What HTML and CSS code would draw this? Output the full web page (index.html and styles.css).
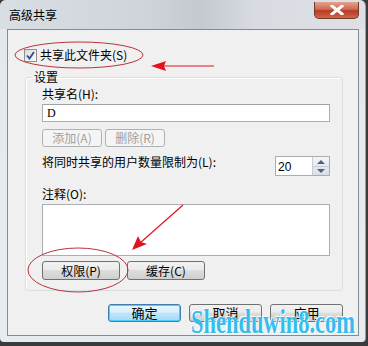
FILE: index.html
```html
<!DOCTYPE html>
<html>
<head>
  <title>高级共享</title>
  <link rel="stylesheet" href="styles.css">
</head>
<body>

  <div class="window">
    <div class="titlebar">
      <span class="title">高级共享</span>
      <span class="close-btn">
        <svg width="14" height="10" viewBox="0 0 14 10">
          <path d="M2 1 L12 9 M12 1 L2 9" stroke="#fff" stroke-width="3" stroke-linecap="square"/>
        </svg>
      </span>
    </div>

    <div class="client">
      <label class="share-check">
        <span class="checkbox">
          <svg width="9" height="9" viewBox="0 0 9 9">
            <path d="M1 4.5 L3.5 7.5 L8 1" fill="none" stroke="#2a4a8a" stroke-width="1.8"/>
          </svg>
        </span>
        共享此文件夹(S)
      </label>

      <fieldset class="settings">
        <legend>设置</legend>

        <div class="field-label">共享名(H):</div>
        <div class="textbox">D</div>

        <div class="btn-row">
          <span class="btn disabled">添加(A)</span>
          <span class="btn disabled">删除(R)</span>
        </div>

        <div class="limit-row">
          <span class="field-label">将同时共享的用户数量限制为(L):</span>
          <span class="spinner">
            <span class="spin-value">20</span>
            <span class="spin-arrows">
              <span class="arrow-up"></span>
              <span class="arrow-down"></span>
            </span>
          </span>
        </div>

        <div class="field-label note-label">注释(O):</div>
        <div class="textarea"></div>

        <div class="btn-row perm-row">
          <span class="btn wide">权限(P)</span>
          <span class="btn wide">缓存(C)</span>
        </div>
      </fieldset>

      <div class="dialog-buttons">
        <span class="btn big default">确定</span>
        <span class="btn big">取消</span>
        <span class="btn big">应用</span>
      </div>
    </div>
  </div>

  <!-- red hand-drawn marks -->
  <svg class="marks" width="368" height="346" viewBox="0 0 368 346">
    <ellipse cx="79" cy="55" rx="64" ry="13" fill="none" stroke="#b8323c" stroke-width="1"/>
    <line x1="214" y1="66" x2="162" y2="66" stroke="#e0141e" stroke-width="1.2"/>
    <path d="M151 66 L166 61 L164 66 L166 71 Z" fill="#e0141e"/>
    <ellipse cx="78" cy="270" rx="50" ry="22" fill="none" stroke="#b8323c" stroke-width="1"/>
    <line x1="183" y1="205" x2="140" y2="243" stroke="#e0141e" stroke-width="1.2"/>
    <path d="M132 250 L138 236 L141 242 L147 244 Z" fill="#e0141e"/>
  </svg>

  <div class="watermark">Shenduwin8.com</div>

</body>
</html>
```

FILE: styles.css
```css
/* Win7 style dialog */
body {
  margin: 0;
  width: 368px;
  height: 346px;
  background: #3b3b3b;
  font-family: "Noto Sans CJK SC", "Liberation Sans", sans-serif;
  font-size: 12px;
  color: #000;
  position: relative;
  overflow: hidden;
}

.window {
  width: 366px;
  height: 342px;
  box-sizing: border-box;
  padding: 0 6px 6px 7px;
  background: linear-gradient(#d6dce3, #e4e8ed 30px, #e9ecef);
  border-radius: 6px 6px 4px 4px;
  border-right: 1px solid #9aa1a8;
  display: flex;
  flex-direction: column;
}

.titlebar {
  height: 29px;
  display: flex;
  align-items: flex-start;
  justify-content: space-between;
  background: linear-gradient(90deg, #d9dee4, #cfd4da 40%, #c4c9cf 55%, #d8dce2 70%, #dde1e6);
  margin: 0 -6px 0 -7px;
  padding: 0 6px 0 9px;
  border-radius: 6px 6px 0 0;
}

.title {
  line-height: 16px;
  margin-top: 7px;
  font-size: 12px;
}

.close-btn {
  width: 45px;
  height: 17px;
  margin-top: 2px;
  box-sizing: border-box;
  border: 1px solid #6e3a2e;
  border-top: none;
  border-radius: 0 0 5px 5px;
  background: linear-gradient(#e3a28f, #cf6a52 45%, #b83a22 55%, #d06848);
  display: flex;
  align-items: center;
  justify-content: center;
}

.client {
  flex: 1;
  background: #f0f0f0;
  border: 1px solid #858b92;
  display: flex;
  flex-direction: column;
}

.share-check {
  display: flex;
  align-items: center;
  gap: 3px;
  height: 16px;
  margin: 17px 0 0 16px;
  line-height: 16px;
}

.checkbox {
  width: 11px;
  height: 11px;
  border: 1px solid #8e8f8f;
  background: linear-gradient(135deg, #dcdcdc, #fbfbfb);
  display: flex;
  align-items: center;
  justify-content: center;
}

.settings {
  margin: 6px 15px 0 17px;
  padding: 1px 12px 10px 16px;
  border: 1px solid #d5dfe5;
  border-radius: 3px;
  box-shadow: inset 1px 1px 0 #fff;
}

.settings legend {
  margin-left: -10px;
  padding: 0 2px;
  line-height: 16px;
}

.field-label {
  line-height: 16px;
}

.textbox {
  height: 18px;
  box-sizing: border-box;
  margin-top: 2px;
  border: 1px solid #abadb3;
  border-top-color: #a0a2a8;
  background: #fff;
  padding-left: 4px;
  line-height: 16px;
  font-family: "Liberation Serif", serif;
}

.btn-row {
  display: flex;
  gap: 3px;
  margin-top: 7px;
}

.btn {
  width: 60px;
  height: 18px;
  box-sizing: border-box;
  border: 1px solid #707070;
  border-radius: 3px;
  background: linear-gradient(#f2f2f2, #ebebeb 45%, #dddddd 50%, #cfcfcf);
  display: flex;
  align-items: center;
  justify-content: center;
  line-height: 16px;
}

.btn.disabled {
  border-color: #adb2b5;
  background: #f4f4f4;
  color: #a0a0a0;
}

.limit-row {
  display: flex;
  justify-content: space-between;
  align-items: flex-start;
  margin-top: 9px;
}

.limit-row .field-label {
  margin-top: -2px;
}

.spinner {
  width: 55px;
  height: 20px;
  box-sizing: border-box;
  border: 1px solid #abadb3;
  background: #fff;
  display: flex;
  justify-content: space-between;
}

.spin-value {
  padding: 2px 0 0 2px;
  line-height: 16px;
  font-family: "Liberation Sans", sans-serif;
  font-size: 12px;
}

.spin-arrows {
  width: 16px;
  display: flex;
  flex-direction: column;
  border-left: 1px solid #c9ccd2;
  background: linear-gradient(#f3f5f8, #d9dee6);
}

.arrow-up,
.arrow-down {
  flex: 1;
  position: relative;
}

.arrow-up::after,
.arrow-down::after {
  content: "";
  position: absolute;
  left: 4px;
  border-left: 4px solid transparent;
  border-right: 4px solid transparent;
}

.arrow-up::after {
  top: 3px;
  border-bottom: 4px solid #4d6185;
}

.arrow-down::after {
  top: 2px;
  border-top: 4px solid #4d6185;
}

.arrow-up {
  border-bottom: 1px solid #c9ccd2;
}

.note-label {
  margin-top: 10px;
}

.textarea {
  height: 52px;
  box-sizing: border-box;
  margin-top: 2px;
  border: 1px solid #abadb3;
  background: #fff;
}

.perm-row {
  margin-top: 5px;
  gap: 7px;
}

.btn.wide {
  width: 78px;
  height: 19px;
}

.dialog-buttons {
  display: flex;
  justify-content: flex-end;
  gap: 8px;
  margin: 13px 15px 0 0;
}

.btn.big {
  width: 73px;
  height: 18px;
  font-size: 13px;
}

.btn.default {
  border-color: #3c7fb1;
  background: linear-gradient(#eaf6fd, #d9f0fc 45%, #bee6fd 50%, #a7d9f5);
  box-shadow: inset 0 0 0 1px #48d0f5;
}

/* annotations and watermark lie over the dialog */
.marks {
  position: absolute;
  left: 0;
  top: 0;
  pointer-events: none;
}

.watermark {
  position: absolute;
  left: 191px;
  top: 304px;
  font-family: "Liberation Serif", serif;
  font-weight: bold;
  font-size: 34px;
  line-height: 36px;
  color: #35bdee;
  white-space: nowrap;
  transform: scaleX(0.66);
  transform-origin: left top;
  text-shadow: 1px 1px 0 #fff, -1px -1px 0 #fff;
}
```
